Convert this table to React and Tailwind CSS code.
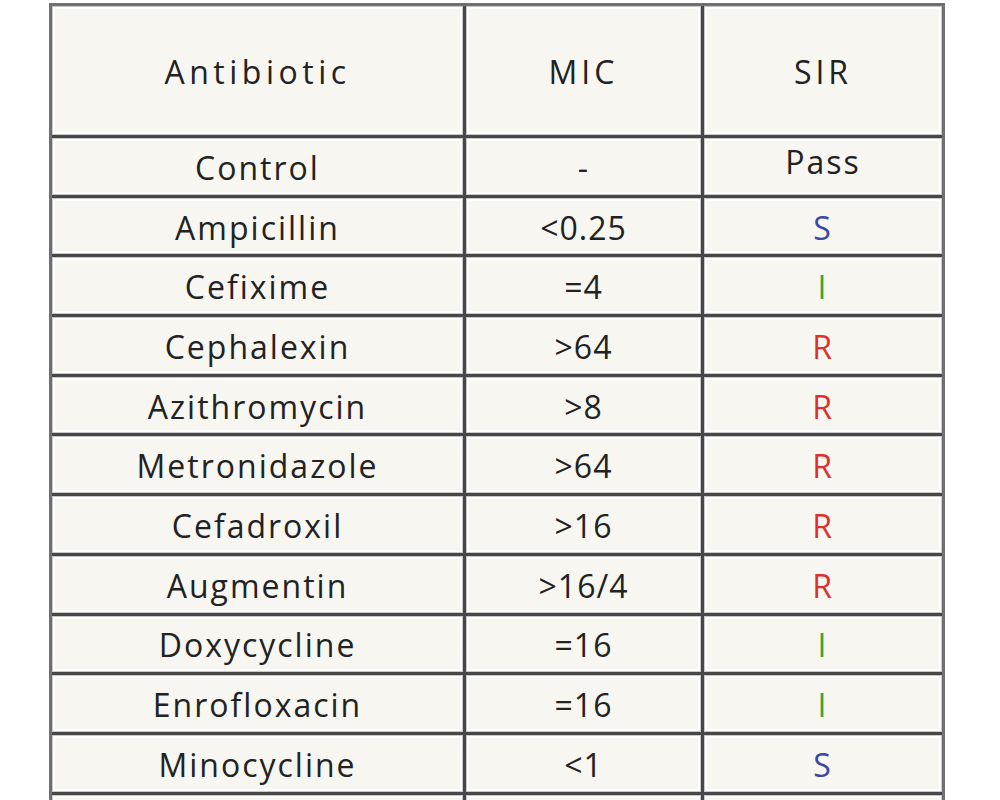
import React from 'react';

const rows = [
  { name: 'Control', mic: '-', sir: 'Pass' },
  { name: 'Ampicillin', mic: '<0.25', sir: 'S' },
  { name: 'Cefixime', mic: '=4', sir: 'I' },
  { name: 'Cephalexin', mic: '>64', sir: 'R' },
  { name: 'Azithromycin', mic: '>8', sir: 'R' },
  { name: 'Metronidazole', mic: '>64', sir: 'R' },
  { name: 'Cefadroxil', mic: '>16', sir: 'R' },
  { name: 'Augmentin', mic: '>16/4', sir: 'R' },
  { name: 'Doxycycline', mic: '=16', sir: 'I' },
  { name: 'Enrofloxacin', mic: '=16', sir: 'I' },
  { name: 'Minocycline', mic: '<1', sir: 'S' },
  { name: '', mic: '', sir: '' },
];

const sirColor = {
  S: 'text-[#3b47a6]',
  I: 'text-[#3aa53a]',
  R: 'text-[#e0302e]',
  Pass: 'text-[#222222] -mt-[12px]',
};

const cell =
  'flex items-center justify-center bg-[#f7f6f1] shadow-[inset_0_0_0_1px_#c8c8c8,inset_0_0_0_3px_#ffffff]';

const App = () => {
  return (
    <div className="min-h-screen bg-white pt-[3px] pl-[49px] font-['Open_Sans',sans-serif] font-medium text-[32px] text-[#222222]">
      <div className="w-[896px] border-[3px] border-b-0 border-[#707070]">
        {/* header */}
        <div className="grid h-[132px] grid-cols-[414px_238px_1fr] border-b-[3px] border-[#474747]">
          <div className={`${cell} border-r-[3px] border-[#474747] tracking-[4.5px] pt-[2px]`}>Antibiotic</div>
          <div className={`${cell} border-r-[3px] border-[#474747] tracking-[4px] pt-[2px]`}>MIC</div>
          <div className={`${cell} tracking-[4px] pt-[2px]`}>SIR</div>
        </div>

        {rows.map((r, i) => (
          <div
            key={i}
            className="grid h-[59.7px] grid-cols-[414px_238px_1fr] border-b-[3px] border-[#474747]"
          >
            <div className={`${cell} border-r-[3px] border-[#474747] tracking-[2px] pt-[3px]`}>{r.name}</div>
            <div className={`${cell} border-r-[3px] border-[#474747] tracking-[1px] pt-[3px]`}>{r.mic}</div>
            <div className={`${cell} tracking-[2px] pt-[3px]`}>
              <span className={sirColor[r.sir] || ''}>{r.sir}</span>
            </div>
          </div>
        ))}
      </div>
    </div>
  );
};

export default App;
